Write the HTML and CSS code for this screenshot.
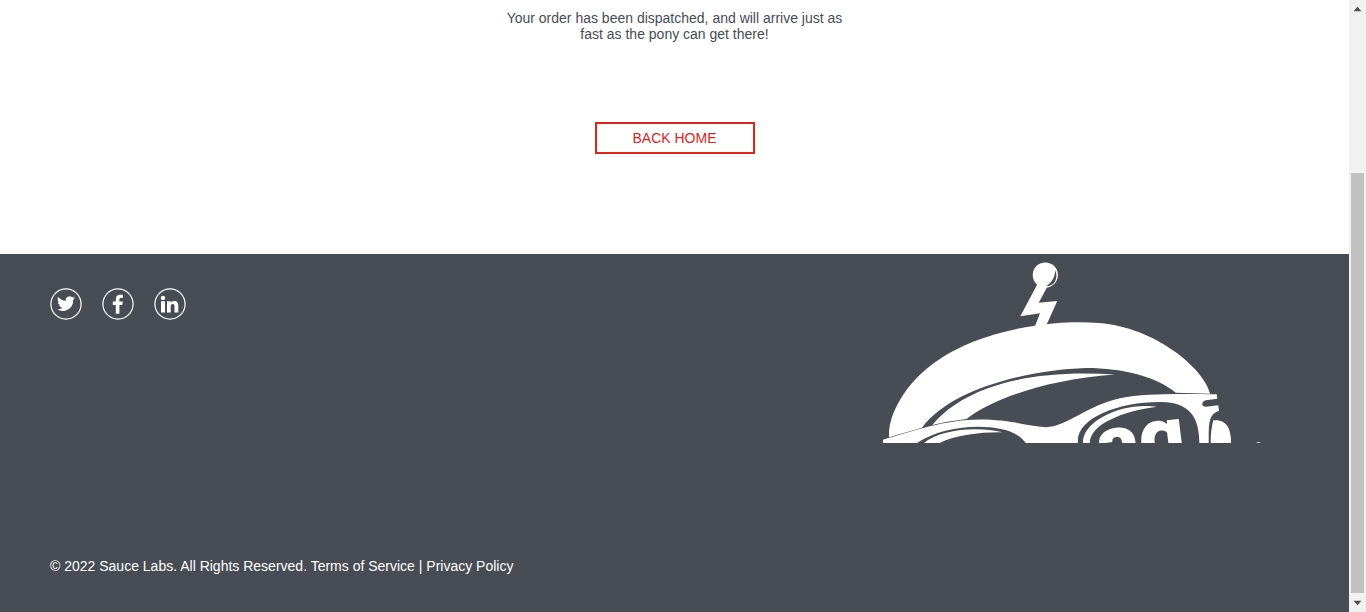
FILE: index.html
```html
<!DOCTYPE html>
<html lang="en">
<head>
<meta charset="utf-8">
<title>Swag Labs</title>
<link rel="stylesheet" href="styles.css">
</head>
<body>
<div class="page">
  <main class="complete">
    <p class="complete-text">Your order has been dispatched, and will arrive just as fast as the pony can get there!</p>
    <button class="back-button">BACK HOME</button>
  </main>
  <footer class="footer">
    <div class="footer-info">
      <ul class="social">
        <li><svg class="social-icon" viewBox="0 0 32 32"><circle class="ring" cx="16" cy="16" r="15.1"/><path transform="translate(-.8 -.9) scale(1.04)" d="M24.800 10.500a7 7 0 0 1-2 .6 3.600 3.600 0 0 0 1.500-2 7 7 0 0 1-2.200.9 3.560 3.560 0 0 0-6.100 3.200 10 10 0 0 1-7.300-3.700 3.600 3.600 0 0 0 1.100 4.800 3.500 3.500 0 0 1-1.600-.5c0 1.700 1.200 3.200 2.800 3.600a3.600 3.600 0 0 1-1.600.1 3.560 3.560 0 0 0 3.300 2.400 7.100 7.100 0 0 1-5.200 1.500 10.100 10.100 0 0 0 15.500-9 7.200 7.200 0 0 0 1.800-1.900z"/></svg></li>
        <li><svg class="social-icon" viewBox="0 0 32 32"><circle class="ring" cx="16" cy="16" r="15.1"/><path d="M13.800 25.700V17h-3v-3.500h3v-2.400c0-2.900 1.700-4.300 4.300-4.300h2.700v3.100h-1.700c-1.300 0-1.700.7-1.700 1.700v1.900h3.400l-.5 3.500h-2.900v8.700z"/></svg></li>
        <li><svg class="social-icon" viewBox="0 0 32 32"><circle class="ring" cx="16" cy="16" r="15.1"/><circle cx="9" cy="9.900" r="2.200"/><path d="M7 13.200h4v11.300H7zM13 13.200h3.700v1.500c.6-1 1.700-1.800 3.400-1.800 3.200 0 4.200 2 4.200 5v6.600h-3.800v-5.900c0-1.500-.4-2.600-1.700-2.600-1.500 0-2.100 1.100-2.100 2.600v5.900H13z"/></svg></li>
      </ul>
      <div class="copyright">© 2022 Sauce Labs. All Rights Reserved. Terms of Service | Privacy Policy</div>
    </div>
    <svg class="robot" viewBox="880 254 390 189">
      <!-- antenna -->
      <circle cx="1045.300" cy="275" r="12.600"/>
      <path class="shade" d="M1055.300 270C1058.500 279 1054.500 286.500 1045.600 286.400C1051 283.500 1055 278 1055.300 270z"/>
      <path d="M1037.500 284L1020.300 316.300L1040 313.300L1034.700 327H1045.500L1057.300 301L1038.700 302.800L1047.700 286z"/>
      <!-- helmet -->
      <path d="M889 437.300C888.400 424 893 412 900 400C918 369 957 337.500 1035 325.700C1053 322.500 1078 321.300 1099 323C1154 327 1204 368 1210.200 393.700L1175.700 392.700C1157 377 1124 368 1086 368C1025 370 949 390 922 427.800z"/>
      <path d="M932.300 425C965 386 1030 369 1115 374.600C1040 380 988 402 966.700 419Q949 421 932.300 425z"/>
      <!-- goggles -->
      <path d="M883 443V439.800C912 431 946 419.500 980 419.500C1010 419.500 1027 426 1046 427.200C1066 427 1088 405 1120 398.300C1145 393.400 1175 394 1216.700 394.300L1217.300 398.800L1206 400.300C1201 401.500 1201 406.500 1206 406.700L1218.300 405.300L1219 411C1208 414 1208.700 425 1208.700 443H1199.400C1199 424 1195 403 1163 402C1120 401 1075 418 1078 443H1025.800C1012 421 948 422 917 443z"/>
      <path d="M924 443C940 429 978 426 1002.700 432.300C980 432 956 435 939.500 443z"/>
      <path d="M1083 443C1082 422 1120 402 1157 406.700C1123 411 1090 424 1089.800 443z"/>
      <path d="M1210.700 443Q1210.600 430 1213.300 420.300C1227 419 1231 429 1231 443z"/>
      <path d="M1255.800 443Q1258.400 441.300 1261 443z"/>
      <text class="lens-letter" transform="translate(1100 473) rotate(-7)">a</text>
      <text class="lens-letter" transform="translate(1142 466) rotate(-7)">g</text>
    </svg>
  </footer>
</div>
<div class="scrollbar">
  <svg class="arrow" viewBox="0 0 17 17"><path d="M4.500 11.200L8.500 6.700L12.500 11.200z"/></svg>
  <div class="thumb"></div>
  <svg class="arrow" viewBox="0 0 17 17"><path d="M4.500 5.800L8.500 10.300L12.500 5.800z"/></svg>
</div>
</body>
</html>
```
FILE: styles.css
```css
* { box-sizing: border-box; }
body {
  margin: 0;
  height: 612px;
  display: flex;
  overflow: hidden;
  font-family: "Liberation Sans", Arial, sans-serif;
  font-size: 14px;
  line-height: 16px;
}
.page { flex: 1; display: flex; flex-direction: column; }
.complete {
  height: 254px;
  padding-top: 10px;
  background: #fff;
  display: flex;
  flex-direction: column;
  align-items: center;
}
.complete-text {
  margin: 0 0 80px;
  width: 350px;
  text-align: center;
  color: #474c55;
}
.back-button {
  width: 160px;
  height: 32px;
  padding: 0;
  border: 2px solid #e2231a;
  background: #fff;
  color: #e2231a;
  font: 14px "Liberation Sans", Arial, sans-serif;
}
.footer {
  flex: 1;
  display: flex;
  justify-content: space-between;
  padding: 0 79px 0 50px;
  background: #474c55;
  color: #fff;
}
.footer-info {
  display: flex;
  flex-direction: column;
  justify-content: space-between;
  padding: 34px 0 38px;
}
.social { display: flex; gap: 20px; margin: 0; padding: 0; list-style: none; }
.social-icon { display: block; width: 32px; height: 32px; fill: #fff; }
.ring { fill: none; stroke: #fff; stroke-width: 1.2; }
.robot { width: 390px; height: 189px; overflow: hidden; fill: #fff; }
.shade { fill: #474c55; }
.lens-letter { font: 900 80px Roboto, "Liberation Sans", sans-serif; }
.scrollbar {
  width: 17px;
  background: #f1f1f1;
  display: flex;
  flex-direction: column;
}
.arrow { width: 17px; height: 17px; fill: #505050; }
.thumb { width: 13px; height: 420px; margin: 156px 2px 2px; background: #c1c1c1; }
```
